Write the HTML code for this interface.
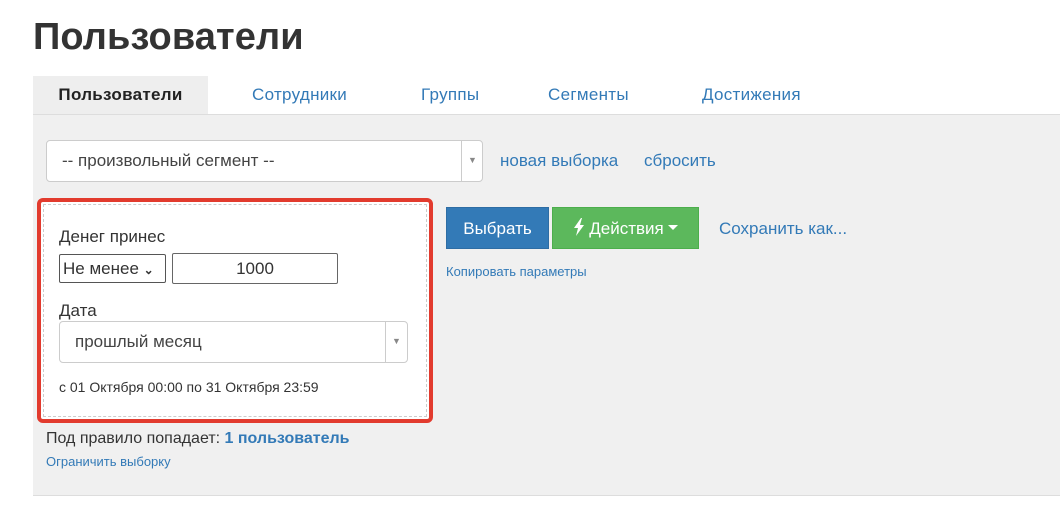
<!DOCTYPE html>
<html><head><meta charset="utf-8"><style>
*{box-sizing:border-box;margin:0;padding:0}
body{width:1060px;height:511px;background:#fff;font-family:"Liberation Sans",sans-serif;color:#333;position:relative;overflow:hidden}
.a{position:absolute}
h1{position:absolute;left:33px;top:16px;font-size:38px;font-weight:bold;color:#333;letter-spacing:0.1px}
.tab{position:absolute;top:76px;height:38px;line-height:38px;font-size:17px;color:#337ab7;letter-spacing:0.3px}
.line{position:absolute;left:33px;top:114px;width:1027px;height:1px;background:#ddd}
.gray{position:absolute;left:33px;top:115px;width:1027px;height:381px;background:#f0f0f0;border-bottom:1px solid #ddd}
.lnk{color:#337ab7;font-size:17px;position:absolute}
</style></head><body>
<h1>Пользователи</h1>
<div class="tab" style="left:33px;width:175px;background:#eee;color:#222;font-weight:bold;text-align:center">Пользователи</div>
<div class="tab" style="left:252px">Сотрудники</div>
<div class="tab" style="left:421px">Группы</div>
<div class="tab" style="left:548px">Сегменты</div>
<div class="tab" style="left:702px">Достижения</div>
<div class="line"></div>
<div class="gray"></div>
<div class="a" style="left:46px;top:140px;width:437px;height:42px;background:#fff;border:1px solid #ccc;border-radius:4px">
 <div class="a" style="left:15px;top:10px;font-size:17px;color:#444">-- произвольный сегмент --</div>
 <div class="a" style="left:414px;top:0;width:1px;height:40px;background:#ccc"></div>
 <div class="a" style="left:421px;top:14px;font-size:9px;color:#888">▼</div>
</div>
<div class="lnk" style="left:500px;top:151px">новая выборка</div>
<div class="lnk" style="left:644px;top:151px">сбросить</div>
<div class="a" style="left:37px;top:198px;width:396px;height:225px;border:4px solid #e23b2e;border-radius:6px;background:#fff">
 <div class="a" style="left:2px;top:2px;width:384px;height:213px;border:1px dashed #ccc"></div>
 <div class="a" style="left:18px;top:25px;font-size:17px">Денег принес</div>
 <div class="a" style="left:18px;top:52px;width:107px;height:29px;border:1px solid #555;border-radius:2px;font-size:17px;padding:4px 0 0 3px">Не менее <span style="font-size:12px;font-weight:bold">&#8964;</span></div>
 <div class="a" style="left:131px;top:51px;width:166px;height:31px;border:1px solid #666;border-radius:2px;font-size:17px;text-align:center;padding-top:5px">1000</div>
 <div class="a" style="left:18px;top:99px;font-size:17px">Дата</div>
 <div class="a" style="left:18px;top:119px;width:349px;height:42px;border:1px solid #ccc;border-radius:4px">
  <div class="a" style="left:15px;top:10px;font-size:17px;color:#444">прошлый месяц</div>
  <div class="a" style="left:325px;top:0;width:1px;height:40px;background:#ccc"></div>
  <div class="a" style="left:332px;top:14px;font-size:9px;color:#888">▼</div>
 </div>
 <div class="a" style="left:18px;top:177px;font-size:14px">с 01 Октября 00:00 по 31 Октября 23:59</div>
</div>
<div class="a" style="left:446px;top:207px;width:103px;height:42px;background:#337ab7;color:#fff;font-size:17px;line-height:42px;text-align:center;border:1px solid #2e6da4">Выбрать</div>
<div class="a" style="left:552px;top:207px;width:147px;height:42px;background:#5cb85c;color:#fff;font-size:17px;line-height:42px;text-align:center;border:1px solid #4cae4c"><svg width="12" height="18" viewBox="0 0 12 18" style="vertical-align:-2px"><path d="M8 0L1 10h4l-2 8 8-11H7l2-7z" fill="#fff"/></svg> Действия <svg width="10" height="6" viewBox="0 0 10 6" style="vertical-align:3px"><path d="M0 0h10L5 5z" fill="#fff"/></svg></div>
<div class="lnk" style="left:719px;top:219px">Сохранить как...</div>
<div class="lnk" style="left:446px;top:264px;font-size:13px">Копировать параметры</div>
<div class="a" style="left:46px;top:430px;font-size:16px">Под правило попадает: <b style="color:#337ab7">1 пользователь</b></div>
<div class="lnk" style="left:46px;top:454px;font-size:13px">Ограничить выборку</div>
</body></html>
